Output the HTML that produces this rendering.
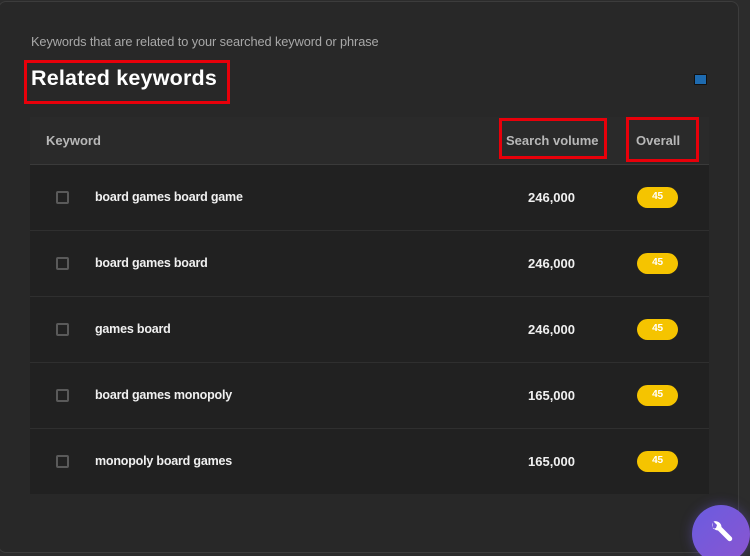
<!DOCTYPE html>
<html><head><style>
*{margin:0;padding:0;box-sizing:border-box}
html,body{width:750px;height:556px;overflow:hidden}
body{background:#2c2c2c;font-family:"Liberation Sans",Arial,sans-serif;position:relative}
.panel{position:absolute;left:-2px;top:1px;width:741px;height:552px;background:#282828;border:1px solid #3c3c3c;border-radius:8px}
.sub{position:absolute;left:31px;top:34px;font-size:12.8px;color:#a8a8a8;letter-spacing:-0.1px}
.title{position:absolute;left:31px;top:66px;font-size:21.5px;font-weight:bold;color:#fff;letter-spacing:0.2px}
.box{position:absolute;border:3px solid #e8000a}
.info{position:absolute;left:694px;top:74px;width:13px;height:11px;background:#1e6bb0;border:1px solid #111;border-radius:1px}
.table{position:absolute;left:30px;top:117px;width:679px;height:377px;background:#212121}
.head{position:absolute;left:0;top:0;width:679px;height:48px;background:#2a2a2a;border-bottom:1px solid #3a3a3a;font-size:13px;font-weight:bold;color:#b8b8b8}
.head span{position:absolute;top:16px}
.row{position:absolute;left:0;width:679px;height:66px;border-bottom:1px solid #2f2f2f;font-size:12.5px;font-weight:bold;color:#f0f0f0;letter-spacing:-0.2px}
.cb{position:absolute;left:26px;top:26px;width:13px;height:13px;border:2px solid #5a5a5a;border-radius:2px}
.kw{position:absolute;left:65px;top:25px}
.vol{position:absolute;right:134px;top:25px;letter-spacing:0;font-size:13px}
.pill{position:absolute;left:607px;top:22px;width:41px;height:21px;background:#f5c400;border-radius:11px;color:#fff;font-size:10px;text-align:center;line-height:19px}
.fab{position:absolute;left:692px;top:505px;width:58px;height:58px;border-radius:50%;background:linear-gradient(135deg,#6a5ce0,#8a55d0);box-shadow:0 0 12px rgba(110,90,220,.4)}
</style></head><body>
<div class="panel"></div>
<div class="sub">Keywords that are related to your searched keyword or phrase</div>
<div class="title">Related keywords</div>
<div class="box" style="left:24px;top:60px;width:206px;height:44px"></div>
<div class="info"></div>
<div class="table">
<div class="head"><span style="left:16px">Keyword</span><span style="left:476px">Search volume</span><span style="left:606px">Overall</span></div>
<div class="row" style="top:48px"><div class="cb"></div><div class="kw">board games board game</div><div class="vol">246,000</div><div class="pill">45</div></div>
<div class="row" style="top:114px"><div class="cb"></div><div class="kw">board games board</div><div class="vol">246,000</div><div class="pill">45</div></div>
<div class="row" style="top:180px"><div class="cb"></div><div class="kw">games board</div><div class="vol">246,000</div><div class="pill">45</div></div>
<div class="row" style="top:246px"><div class="cb"></div><div class="kw">board games monopoly</div><div class="vol">165,000</div><div class="pill">45</div></div>
<div class="row" style="top:312px;border:none;height:65px"><div class="cb"></div><div class="kw">monopoly board games</div><div class="vol">165,000</div><div class="pill">45</div></div>
</div>
<div class="box" style="left:499px;top:118px;width:108px;height:41px"></div>
<div class="box" style="left:626px;top:117px;width:73px;height:45px"></div>
<div class="fab"><svg width="58" height="58" viewBox="0 0 58 58"><path d="M20.5 17.5 A6 6 0 0 0 26 25.5 L36 35.5 A2.2 2.2 0 0 0 39.5 32 L29.5 22 A6 6 0 0 0 21.5 16.5 L25 20 L24 23 L21 24 Z" fill="#fff"/></svg></div>
</body></html>
